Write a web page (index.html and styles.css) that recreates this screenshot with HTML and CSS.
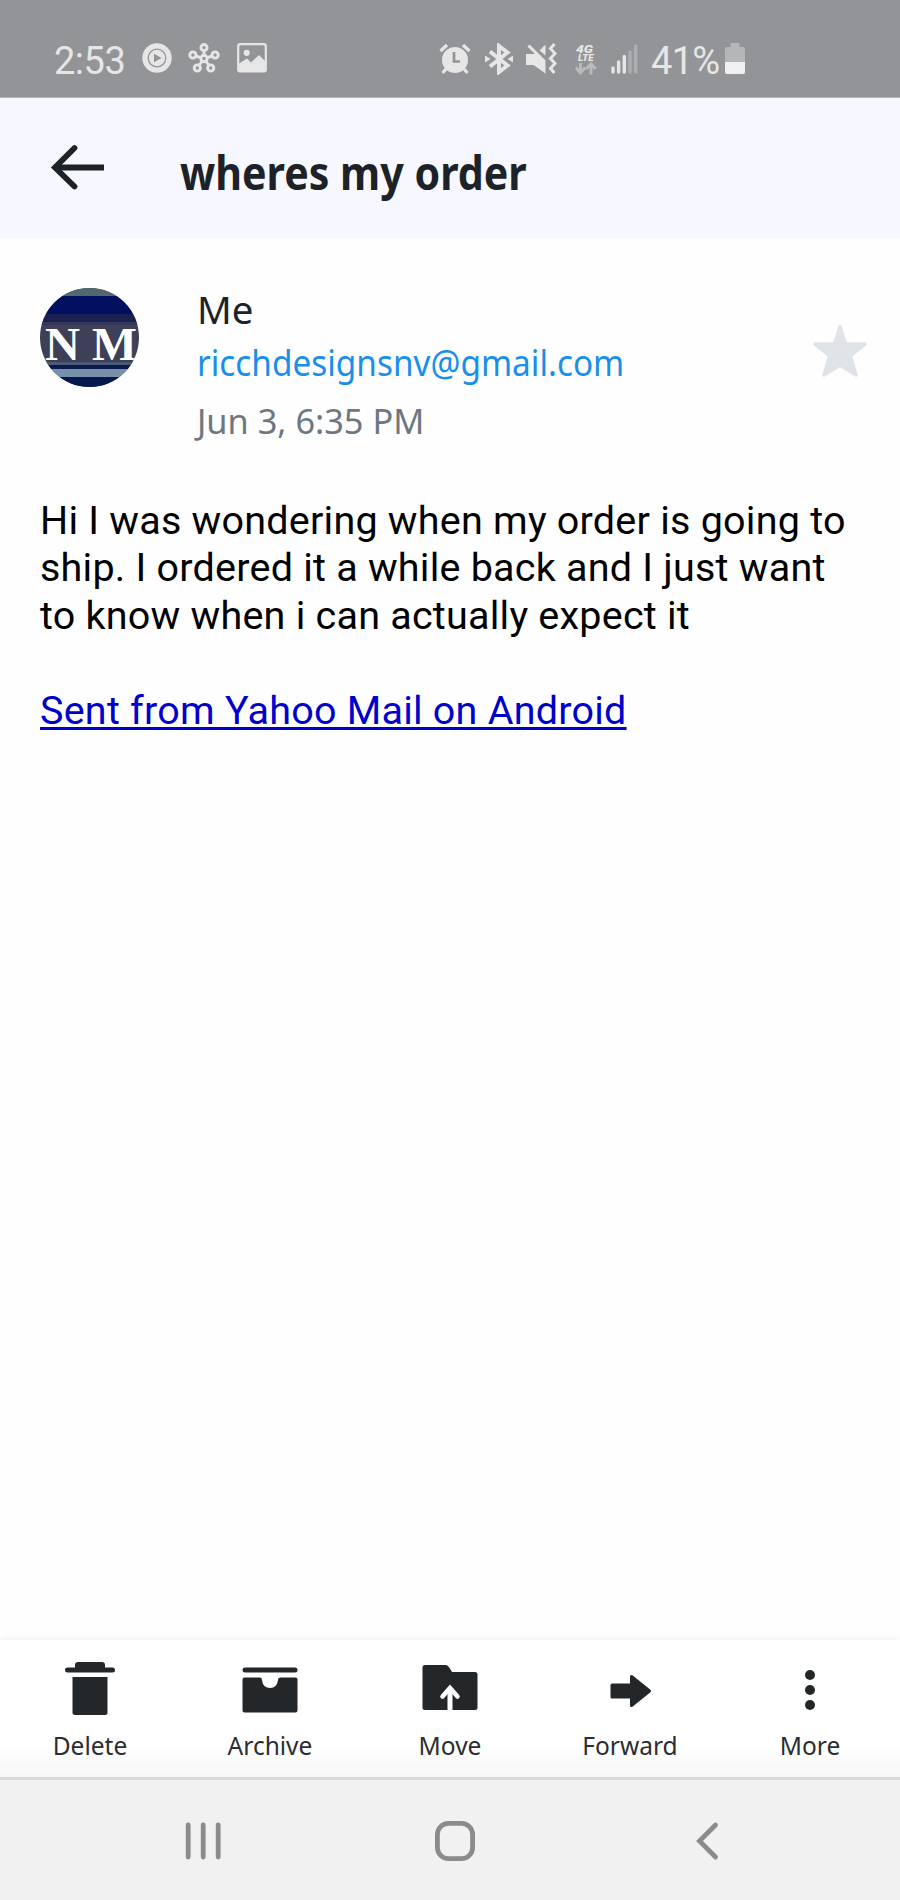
FILE: index.html
```html
<!DOCTYPE html>
<html lang="en">
<head>
    <meta charset="UTF-8" />
    <meta name="viewport" content="width=device-width, initial-scale=1.0" />
    <title>wheres my order</title>
    <link rel="stylesheet" href="styles.css">
</head>
<body>
    <!-- ========= Status bar ========= -->
    <div class="status-bar">
        <div class="status-left">
            <span class="clock">2:53</span>
            <svg class="icon-play" width="30" height="30" viewBox="0 0 30 30">
                <circle cx="15" cy="15" r="14.7" fill="#e6e6e7"/>
                <circle cx="15" cy="15" r="8.8" fill="none" stroke="#939497" stroke-width="1.3"/>
                <path d="M12 10.8L19.5 15L12 19.2Z" fill="#939497"/>
            </svg>
            <svg class="icon-hub" width="32" height="30" viewBox="0 0 32 30" fill="none" stroke="#e6e6e7" stroke-width="2.9">
                <circle cx="16" cy="15.5" r="3.2"/>
                <circle cx="16" cy="4.6" r="3.1"/>
                <circle cx="4.9" cy="12" r="3.1"/>
                <circle cx="27.1" cy="12" r="3.1"/>
                <circle cx="9.3" cy="25" r="3.1"/>
                <circle cx="22.7" cy="25" r="3.1"/>
                <path d="M16 7.3V12.5M7.6 13L13 14.6M24.4 13L19 14.6M11 22.5L14.2 18M21 22.5L17.8 18"/>
            </svg>
            <svg width="30" height="30" viewBox="0 0 30 30">
                <rect x="1.2" y="1.2" width="27.6" height="27.2" rx="2" fill="none" stroke="#e6e6e7" stroke-width="2.2"/>
                <circle cx="9.7" cy="9.8" r="3.1" fill="#e6e6e7"/>
                <path d="M2 20.5L10 15.5L14 19.5L22 12L28 18V28H2Z" fill="#e6e6e7"/>
            </svg>
        </div>
        <div class="status-right">
            <svg class="icon-alarm" width="32" height="32" viewBox="0 0 32 32">
                <circle cx="16" cy="17" r="13" fill="#e6e6e7"/>
                <path d="M1.5 8L8 2M30.5 8L24 2M7 26L3.5 30M25 26L28.5 30" stroke="#e6e6e7" stroke-width="3.2"/>
                <path d="M15 9V18.5H21" fill="none" stroke="#939497" stroke-width="2.7"/>
            </svg>
            <svg class="icon-bluetooth" width="28" height="32" viewBox="0 0 28 32">
                <path d="M5 8.5L22.5 22.5L14 29V3L22.5 9.5L5 23.5" fill="none" stroke="#e6e6e7" stroke-width="4"/>
                <path d="M0 12.5L5.5 16L0 19.5ZM28 12.5L22.5 16L28 19.5Z" fill="#e6e6e7"/>
            </svg>
            <svg class="icon-mute" width="31" height="32" viewBox="0 0 31 32">
                <path d="M0 11H10L19.5 20V30.5L7.5 22H0ZM13.5 7.5L19.5 1.5V12.5Z" fill="#e6e6e7"/>
                <path d="M2.5 2.5L19 19" stroke="#e6e6e7" stroke-width="3"/>
                <path d="M28.5 1L24.5 5.5L29 10.5L24.5 15.5L29 20.5L24.5 25.5L28.5 30" fill="none" stroke="#e6e6e7" stroke-width="3"/>
            </svg>
            <svg class="icon-lte" width="22" height="35" viewBox="0 -2 22 35">
                <text class="net-label" x="1" y="9.5" font-size="11.5" textLength="17" lengthAdjust="spacingAndGlyphs">4G</text>
                <text class="net-label" x="3" y="17.5" font-size="9" textLength="15.5" lengthAdjust="spacingAndGlyphs">LTE</text>
                <path d="M5.5 20V29M0.8 24.5L5.5 30L10.2 24.5M16 31.5V22M11.3 26L16 20.8L20.7 26" fill="none" stroke="#b9babc" stroke-width="2.9"/>
            </svg>
            <svg class="icon-signal" width="27" height="30" viewBox="0 0 27 30">
                <path d="M2 24V28M7.6 18V28M13.3 12.5V28" stroke="#e6e6e7" stroke-width="3.4" stroke-linecap="round"/>
                <path d="M19 8V28M24.7 2V28" stroke="#acadb0" stroke-width="3.4" stroke-linecap="round"/>
            </svg>
            <span class="percent">41%</span>
            <svg class="icon-battery" width="20" height="31" viewBox="0 0 20 31">
                <path d="M5.5 0H14.5V4H18Q20 4 20 6V19H0V6Q0 4 2 4H5.5Z" fill="#b5b6b8"/>
                <path d="M0 19H20V29Q20 31 18 31H2Q0 31 0 29Z" fill="#f0f0f1"/>
            </svg>
        </div>
    </div>

    <!-- ========= Subject header ========= -->
    <header class="header">
        <svg class="back" width="54" height="46" viewBox="0 0 54 46" fill="none" stroke="#1d2228" stroke-width="5.8">
            <path d="M54 23.5H5"/>
            <path d="M24.5 4L5 23.5L24.5 42.5" stroke-linecap="round"/>
        </svg>
        <h1 class="subject">wheres my order</h1>
    </header>

    <!-- ========= Message ========= -->
    <main class="message">
        <div class="sender">
            <svg class="avatar" width="99" height="99" viewBox="0 0 99 99">
                <rect width="99" height="99" fill="#3d4056"/>
                <rect width="99" height="9" fill="#52676e"/>
                <rect y="8" width="99" height="18" fill="#00105f"/>
                <rect y="26" width="99" height="8" fill="#19204f"/>
                <rect y="34" width="99" height="3" fill="#34375a"/>
                <rect y="74" width="99" height="3" fill="#4c5874"/>
                <rect y="77" width="99" height="4" fill="#091b4c"/>
                <rect y="81" width="99" height="9" fill="#7890aa"/>
                <rect y="89" width="99" height="10" fill="#06194f"/>
                <text class="avatar-text" x="5" y="72" textLength="35" lengthAdjust="spacingAndGlyphs">N</text>
                <text class="avatar-text" x="52" y="72" textLength="45" lengthAdjust="spacingAndGlyphs">M</text>
            </svg>
            <div class="sender-info">
                <div class="name">Me</div>
                <div class="email">ricchdesignsnv@gmail.com</div>
                <div class="date">Jun 3, 6:35 PM</div>
            </div>
            <svg class="star" width="56" height="54" viewBox="0 0 56 54">
                <path d="M28 3L33.5 20H53L38.5 32L44 51L28 41L12 51L17.5 32L3 20H22.5Z" fill="#e0e4e9" stroke="#e0e4e9" stroke-width="3.5" stroke-linejoin="round"/>
            </svg>
        </div>
        <div class="body-text">
            <p>Hi I was wondering when my order is going to ship. I ordered it a while back and I just want to know when i can actually expect it</p>
            <p><a class="signature" href="#">Sent from Yahoo Mail on Android</a></p>
        </div>
    </main>

    <!-- ========= Actions ========= -->
    <div class="toolbar">
        <div class="action">
            <svg width="56" height="56" viewBox="0 0 56 56" fill="#232729">
                <path d="M13 9V5Q13 2 16 2H40Q43 2 43 5V9Z"/>
                <rect x="3" y="7.5" width="50" height="5" rx="2.5"/>
                <path d="M10.5 17H45.5V52.5Q45.5 55 43 55H13Q10.5 55 10.5 52.5Z"/>
            </svg>
            <span>Delete</span>
        </div>
        <div class="action">
            <svg width="56" height="56" viewBox="0 0 56 56" fill="#232729">
                <rect x="0.5" y="7.5" width="55" height="5" rx="2.5"/>
                <path d="M2.5 17.5H18Q20 17.5 20 20Q21 28 28 28Q35 28 36 20Q36 17.5 38 17.5H53.5Q55.5 17.5 55.5 19.5V50.5Q55.5 52.5 53.5 52.5H2.5Q0.5 52.5 0.5 50.5V19.5Q0.5 17.5 2.5 17.5Z"/>
            </svg>
            <span>Archive</span>
        </div>
        <div class="action">
            <svg width="56" height="56" viewBox="0 0 56 56">
                <path d="M3 5H24Q26 5 28 8.5L30 12H53Q55.5 12 55.5 14.5V47.5Q55.5 50 53 50H3Q0.5 50 0.5 47.5V7.5Q0.5 5 3 5Z" fill="#232729"/>
                <path d="M28 50.5V28" fill="none" stroke="#fff" stroke-width="5"/>
                <path d="M20.5 36.5L28 28L35.5 36.5" fill="none" stroke="#fff" stroke-width="4.5" stroke-linecap="round"/>
            </svg>
            <span>Move</span>
        </div>
        <div class="action">
            <svg width="56" height="56" viewBox="0 0 56 56">
                <path d="M10 25H29.5V16.5L47.5 31L29.5 45.5V37H10Z" fill="#232729" stroke="#232729" stroke-width="3" stroke-linejoin="round"/>
            </svg>
            <span>Forward</span>
        </div>
        <div class="action">
            <svg width="56" height="56" viewBox="0 0 56 56" fill="#232729">
                <circle cx="28" cy="15" r="5"/>
                <circle cx="28" cy="30" r="5"/>
                <circle cx="28" cy="45" r="5"/>
            </svg>
            <span>More</span>
        </div>
    </div>

    <!-- ========= System navigation ========= -->
    <nav class="nav-bar">
        <svg class="recents" width="36" height="40" viewBox="0 0 36 40" stroke="#8b8b8b" stroke-width="4.8" stroke-linecap="round">
            <path d="M3.2 4V36M18.2 4V36M33.2 4V36"/>
        </svg>
        <svg class="home" width="40" height="40" viewBox="0 0 40 40" fill="none" stroke="#8b8b8b" stroke-width="4.8">
            <rect x="2.4" y="2.4" width="35.2" height="35.2" rx="11"/>
        </svg>
        <svg width="23" height="40" viewBox="0 0 23 40" fill="none" stroke="#8b8b8b" stroke-width="4.8" stroke-linecap="round">
            <path d="M19.5 4L3.5 20L19.5 36"/>
        </svg>
    </nav>
</body>
</html>
```
FILE: styles.css
```css
:root {
    --status-bg: #939497;
    --status-fg: #e6e6e7;
    --header-bg: #f6f7ff;
    --ink: #1d2228;
    --link: #188fec;
    --muted: #6e7780;
}

* {
    box-sizing: border-box;
}

body {
    margin: 0;
    width: 900px;
    height: 1900px;
    display: flex;
    flex-direction: column;
    background: #fefefe;
    font-family: "Noto Sans", sans-serif;
    color: var(--ink);
}

svg {
    display: block;
    flex: none;
}

/* ====== Status bar ====== */
.status-bar {
    height: 98px;
    flex: none;
    display: flex;
    padding: 43px 0 0 54px;
    background: var(--status-bg);
    border-bottom: 1px solid #b5b6ba;
    color: var(--status-fg);
    font: 400 38px/37px Roboto, sans-serif;
}
.status-left,
.status-right {
    display: flex;
    align-items: flex-start;
}
.status-left {
    width: 385px;
}
.clock {
    width: 88px;
    letter-spacing: -0.5px;
}
.icon-play {
    margin-right: 16px;
}
.icon-hub {
    margin-right: 17px;
}
.icon-alarm {
    margin-right: 14px;
}
.icon-bluetooth {
    margin-right: 13px;
}
.icon-mute {
    margin-right: 18px;
}
.icon-lte {
    margin: -2px 14px 0 0;
}
.icon-signal {
    margin: 1px 13px 0 0;
}
.percent {
    width: 74px;
    letter-spacing: -0.7px;
}
.net-label {
    font-family: Roboto, sans-serif;
    font-weight: 900;
    font-style: italic;
    fill: var(--status-fg);
}

/* ====== Subject header ====== */
.header {
    height: 140px;
    flex: none;
    display: flex;
    padding: 46px 0 0 50px;
    background: var(--header-bg);
}
.subject {
    margin: -2px 0 0 76px;
    font-size: 46px;
    line-height: 60px;
    font-weight: 700;
    white-space: nowrap;
    transform: scaleX(0.895);
    transform-origin: left;
}

/* ====== Message ====== */
.message {
    flex: 1;
    padding: 50px 31px 0 40px;
}
.sender {
    display: flex;
    height: 197px;
}
.sender-info {
    width: 615px;
    margin-left: 58px;
    white-space: nowrap;
}
.name,
.email,
.date {
    transform-origin: left;
}
.name {
    margin-top: -2px;
    font-size: 38px;
    line-height: 46px;
    transform: scaleX(1.01);
}
.email {
    margin-top: 8px;
    color: var(--link);
    font-size: 36px;
    line-height: 46px;
    transform: scaleX(0.926);
}
.date {
    margin-top: 12px;
    color: var(--muted);
    font-size: 35px;
    line-height: 46px;
    transform: scaleX(0.98);
}
.star {
    margin-top: 36px;
}
.avatar {
    border-radius: 50%;
}
.avatar-text {
    font: 700 46px "Liberation Serif", serif;
    fill: #fff;
}
.body-text {
    margin-top: 12px;
    font: 39.5px/47.4px Roboto, sans-serif;
    letter-spacing: 0.23px;
    color: #000;
}
.body-text p {
    margin: 0 20px 47.4px 0;
}
.signature {
    color: #0000cc;
    text-decoration-thickness: 3px;
    text-underline-offset: 3px;
}

/* ====== Actions ====== */
.toolbar {
    height: 140px;
    flex: none;
    display: grid;
    grid-template-columns: repeat(5, 1fr);
    padding-top: 20px;
    background: linear-gradient(#fff 75%, #f6f6f6);
    border-bottom: 3px solid #dadada;
    box-shadow: 0 -2px 5px rgba(0, 0, 0, 0.05);
}
.action {
    display: flex;
    flex-direction: column;
    align-items: center;
    font-size: 24.5px;
    line-height: 34px;
    color: #2b2d30;
}
.action span {
    margin-top: 13px;
}

/* ====== System navigation ====== */
.nav-bar {
    height: 120px;
    flex: none;
    display: flex;
    padding: 41px 0 0 185px;
    background: #f1f1f1;
}
.recents {
    margin-right: 214px;
}
.home {
    margin-right: 221px;
}
```
